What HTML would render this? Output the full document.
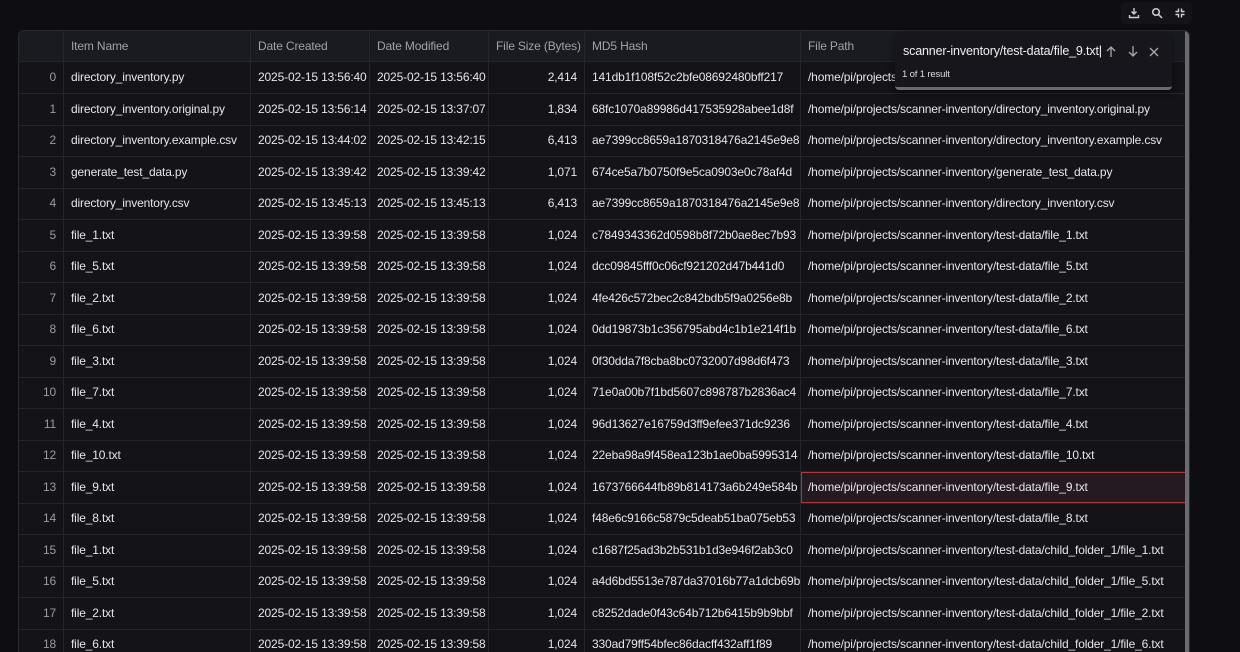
<!DOCTYPE html>
<html style="width:1240px;height:652px;overflow:hidden"><head><meta charset="utf-8"><style>
*{box-sizing:border-box;margin:0;padding:0}
body{width:1240px;height:652px;background:#0e0e12;overflow:hidden;font-family:"Liberation Sans",sans-serif;font-size:12px;color:#e6e6ea;position:relative;letter-spacing:-0.15px}
.wrap{position:absolute;left:18px;top:30px;width:1172px;height:622px;border:1px solid #2a2b31;border-bottom:none;border-radius:6px 6px 0 0;overflow:hidden;background:#131318}
.row{position:absolute;left:0;width:1172px;height:32px;border-bottom:1px solid #25262c}
.c{position:absolute;top:0;height:100%;line-height:31px;padding:0 7px;white-space:nowrap;overflow:hidden;border-right:1px solid #25262c}
.hd{background:#1a1b21;height:31px;top:0}
.hd .c{color:#a0a2aa;line-height:30px}
.idx{color:#9a9ca4;text-align:right}
.r{text-align:right}
.sb{position:absolute;left:1166px;top:0;width:5px;height:640px;background:#6a6b70}
.tb{position:absolute;left:1121px;top:2px;width:71px;height:22px;background:#131318;border-radius:4px}
.pop{position:absolute;left:895px;top:33px;width:277px;height:57px;background:#16161c;border-radius:4px;border-bottom:3px solid #6a6b70;box-shadow:0 2px 8px rgba(0,0,0,.5)}
.pop .q{position:absolute;left:8px;top:11px;font-size:12.5px;color:#f0f0f2}
.pop .res{position:absolute;left:7px;top:36px;font-size:9.5px;color:#ddd}
</style></head><body>
<div class="tb">
<svg style="position:absolute;left:7px;top:5px" width="12" height="12" viewBox="0 0 12 12" fill="none" stroke="#d0d0d4" stroke-width="1.4"><path d="M6 1v6M3.5 4.5L6 7l2.5-2.5M1.5 8v2.5h9V8"/></svg>
<svg style="position:absolute;left:30px;top:5px" width="12" height="12" viewBox="0 0 12 12" fill="none" stroke="#d0d0d4" stroke-width="1.5"><circle cx="5" cy="5" r="3.3"/><path d="M7.5 7.5L11 11"/></svg>
<svg style="position:absolute;left:54px;top:6px" width="10" height="10" viewBox="0 0 10 10" fill="none" stroke="#d0d0d4" stroke-width="1.4"><path d="M3.5 0.5v3h-3M6.5 0.5v3h3M3.5 9.5v-3h-3M6.5 9.5v-3h3"/></svg>
</div>
<div class="wrap" id="w"></div>
<div class="pop"><div class="q">scanner-inventory/test-data/file_9.txt<span style="color:#fff">|</span></div>
<svg style="position:absolute;left:210px;top:12px" width="12" height="13" viewBox="0 0 12 13" fill="none" stroke="#aaa" stroke-width="1.3"><path d="M6 12V2M2 6l4-4 4 4"/></svg>
<svg style="position:absolute;left:232px;top:12px" width="12" height="13" viewBox="0 0 12 13" fill="none" stroke="#aaa" stroke-width="1.3"><path d="M6 1v10M2 7l4 4 4-4"/></svg>
<svg style="position:absolute;left:254px;top:14px" width="10" height="10" viewBox="0 0 10 10" fill="none" stroke="#aaa" stroke-width="1.3"><path d="M1 1l8 8M9 1l-8 8"/></svg>
<div class="res">1 of 1 result</div></div>
<script>
var cols=[[0,45],[45,187],[232,119],[351,119],[470,96],[566,216],[782,390]];
var d=[
["directory_inventory.py","2025-02-15 13:56:40","2025-02-15 13:56:40","2,414","141db1f108f52c2bfe08692480bff217","/home/pi/projects/scanner-inventory/directory_inventory.py"],
["directory_inventory.original.py","2025-02-15 13:56:14","2025-02-15 13:37:07","1,834","68fc1070a89986d417535928abee1d8f","/home/pi/projects/scanner-inventory/directory_inventory.original.py"],
["directory_inventory.example.csv","2025-02-15 13:44:02","2025-02-15 13:42:15","6,413","ae7399cc8659a1870318476a2145e9e8","/home/pi/projects/scanner-inventory/directory_inventory.example.csv"],
["generate_test_data.py","2025-02-15 13:39:42","2025-02-15 13:39:42","1,071","674ce5a7b0750f9e5ca0903e0c78af4d","/home/pi/projects/scanner-inventory/generate_test_data.py"],
["directory_inventory.csv","2025-02-15 13:45:13","2025-02-15 13:45:13","6,413","ae7399cc8659a1870318476a2145e9e8","/home/pi/projects/scanner-inventory/directory_inventory.csv"],
["file_1.txt",0,0,0,"c7849343362d0598b8f72b0ae8ec7b93","/home/pi/projects/scanner-inventory/test-data/file_1.txt"],
["file_5.txt",0,0,0,"dcc09845fff0c06cf921202d47b441d0","/home/pi/projects/scanner-inventory/test-data/file_5.txt"],
["file_2.txt",0,0,0,"4fe426c572bec2c842bdb5f9a0256e8b","/home/pi/projects/scanner-inventory/test-data/file_2.txt"],
["file_6.txt",0,0,0,"0dd19873b1c356795abd4c1b1e214f1b","/home/pi/projects/scanner-inventory/test-data/file_6.txt"],
["file_3.txt",0,0,0,"0f30dda7f8cba8bc0732007d98d6f473","/home/pi/projects/scanner-inventory/test-data/file_3.txt"],
["file_7.txt",0,0,0,"71e0a00b7f1bd5607c898787b2836ac4","/home/pi/projects/scanner-inventory/test-data/file_7.txt"],
["file_4.txt",0,0,0,"96d13627e16759d3ff9efee371dc9236","/home/pi/projects/scanner-inventory/test-data/file_4.txt"],
["file_10.txt",0,0,0,"22eba98a9f458ea123b1ae0ba5995314","/home/pi/projects/scanner-inventory/test-data/file_10.txt"],
["file_9.txt",0,0,0,"1673766644fb89b814173a6b249e584b","/home/pi/projects/scanner-inventory/test-data/file_9.txt"],
["file_8.txt",0,0,0,"f48e6c9166c5879c5deab51ba075eb53","/home/pi/projects/scanner-inventory/test-data/file_8.txt"],
["file_1.txt",0,0,0,"c1687f25ad3b2b531b1d3e946f2ab3c0","/home/pi/projects/scanner-inventory/test-data/child_folder_1/file_1.txt"],
["file_5.txt",0,0,0,"a4d6bd5513e787da37016b77a1dcb69b","/home/pi/projects/scanner-inventory/test-data/child_folder_1/file_5.txt"],
["file_2.txt",0,0,0,"c8252dade0f43c64b712b6415b9b9bbf","/home/pi/projects/scanner-inventory/test-data/child_folder_1/file_2.txt"],
["file_6.txt",0,0,0,"330ad79ff54bfec86dacff432aff1f89","/home/pi/projects/scanner-inventory/test-data/child_folder_1/file_6.txt"]];
var h='<div class="row hd">';
var hn=["","Item Name","Date Created","Date Modified","File Size (Bytes)","MD5 Hash","File Path"];
for(var j=0;j<7;j++)h+='<div class="c" style="left:'+cols[j][0]+'px;width:'+cols[j][1]+'px">'+hn[j]+'</div>';
h+='</div>';
for(var i=0;i<d.length;i++){var r=d[i];var t=31+i*31.5;
h+='<div class="row" style="top:'+t+'px">';
var v=[i,r[0],r[1]||"2025-02-15 13:39:58",r[2]||"2025-02-15 13:39:58",r[3]||"1,024",r[4],r[5]];
for(var j=0;j<7;j++){var cl='c'+(j==0?' idx':'')+(j==4?' r':'');var st='left:'+cols[j][0]+'px;width:'+cols[j][1]+'px';
if(i==13&&j==6)st+=';background:#241a1f;border:1px solid #a8393d;line-height:29px;padding-left:6px';
h+='<div class="'+cl+'" style="'+st+'">'+v[j]+'</div>';}
h+='</div>';}
h+='<div class="sb"></div>';
document.getElementById('w').innerHTML=h;
</script>
</body></html>
